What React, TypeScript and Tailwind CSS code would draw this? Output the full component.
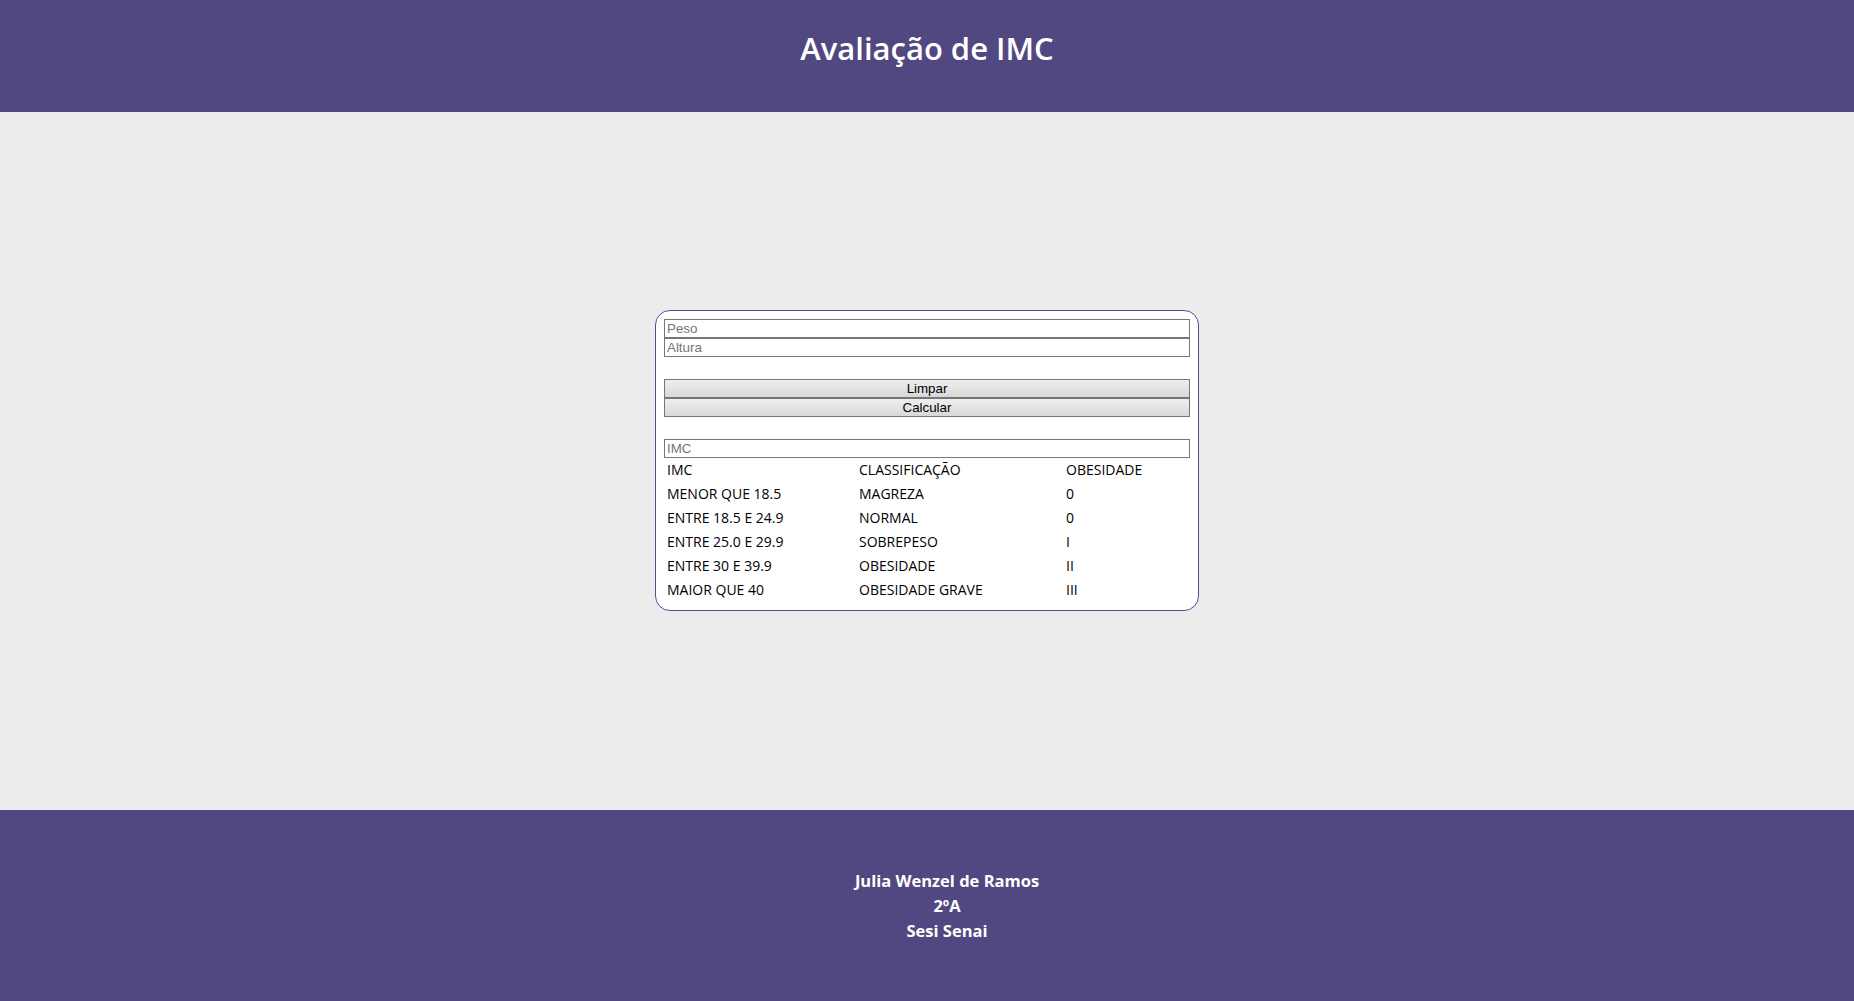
import React from "react";

const rows: [string, string, string][] = [
  ["IMC", "CLASSIFICAÇÃO", "OBESIDADE"],
  ["MENOR QUE 18.5", "MAGREZA", "0"],
  ["ENTRE 18.5 E 24.9", "NORMAL", "0"],
  ["ENTRE 25.0 E 29.9", "SOBREPESO", "I"],
  ["ENTRE 30 E 39.9", "OBESIDADE", "II"],
  ["MAIOR QUE 40", "OBESIDADE GRAVE", "III"],
];

function Field({ placeholder }: { placeholder: string }) {
  return (
    <input
      type="text"
      placeholder={placeholder}
      className="block h-[19px] w-full border border-[#767676] bg-white px-[2px] text-[13.33px] leading-[17px] text-black outline-none placeholder:text-[#757575] [font-family:Arial,'Liberation_Sans',sans-serif]"
    />
  );
}

function Btn({ label }: { label: string }) {
  return (
    <button
      type="button"
      className="block h-[19px] w-full border border-[#767676] bg-gradient-to-b from-[#efefef] to-[#d8d8d8] text-center text-[13.33px] leading-[17px] text-black [font-family:Arial,'Liberation_Sans',sans-serif]"
    >
      {label}
    </button>
  );
}

export default function App() {
  return (
    <div className="flex min-h-screen flex-col bg-[#ececec] [font-family:'Open_Sans',sans-serif]">
      <header className="h-[112px] bg-[#524881] pt-[24px]">
        <h1 className="text-center text-[31px] font-semibold leading-[48px] text-white">
          Avaliação de IMC
        </h1>
      </header>

      <main className="flex flex-1 items-center justify-center">
        <div className="-mt-[1px] w-[544px] rounded-[15px] border border-[#55499a] bg-white p-[8px]">
          <Field placeholder="Peso" />
          <Field placeholder="Altura" />
          <div className="h-[22px]" />
          <Btn label="Limpar" />
          <Btn label="Calcular" />
          <div className="h-[22px]" />
          <Field placeholder="IMC" />
          <div className="flex flex-col gap-y-[2px] pl-[3px] pt-[2px]">
            {rows.map((r, i) => (
              <div
                key={i}
                className="grid h-[22px] grid-cols-[192px_207px_1fr] text-[14px] leading-[19.5px] text-black"
              >
                <span>{r[0]}</span>
                <span>{r[1]}</span>
                <span>{r[2]}</span>
              </div>
            ))}
          </div>
        </div>
      </main>

      <footer className="h-[191px] bg-[#524881] pl-[40px] pt-[58px]">
        <div className="text-center text-[16.5px] font-bold leading-[25px] text-white">
          <p>Julia Wenzel de Ramos</p>
          <p>2ºA</p>
          <p>Sesi Senai</p>
        </div>
      </footer>
    </div>
  );
}
